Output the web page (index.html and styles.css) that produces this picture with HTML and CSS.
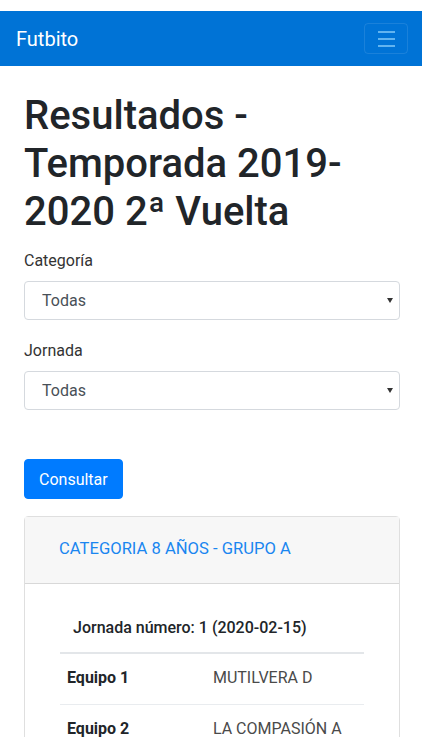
FILE: index.html
```html
<!DOCTYPE html>
<html lang="es">

<head>
    <meta charset="UTF-8">
    <meta name="viewport" content="width=device-width, initial-scale=1.0">
    <title>Resultados - Futbito</title>
    <link rel="stylesheet" href="styles.css">
</head>

<body>
    <div class="screen">
        <nav class="navbar">
            <a class="brand" href="#">Futbito</a>
            <button class="toggler" type="button">
                <span class="bar"></span>
                <span class="bar"></span>
                <span class="bar"></span>
            </button>
        </nav>

        <main class="container">
            <h1>Resultados - Temporada 2019-2020 2ª Vuelta</h1>

            <form class="filters">
                <div class="form-group">
                    <label for="categoria">Categoría</label>
                    <div class="select-wrap">
                        <select id="categoria">
                            <option>Todas</option>
                        </select>
                    </div>
                </div>
                <div class="form-group">
                    <label for="jornada">Jornada</label>
                    <div class="select-wrap">
                        <select id="jornada">
                            <option>Todas</option>
                        </select>
                    </div>
                </div>
                <button class="btn-primary" type="button">Consultar</button>
            </form>

            <div class="card">
                <div class="card-header">
                    <a href="#">CATEGORIA 8 AÑOS - GRUPO A</a>
                </div>
                <div class="card-body">
                    <table class="results">
                        <thead>
                            <tr>
                                <th colspan="2">Jornada número: 1 (2020-02-15)</th>
                            </tr>
                        </thead>
                        <tbody>
                            <tr>
                                <th class="label">Equipo 1</th>
                                <td>MUTILVERA D</td>
                            </tr>
                            <tr>
                                <th class="label">Equipo 2</th>
                                <td>LA COMPASIÓN A</td>
                            </tr>
                        </tbody>
                    </table>
                </div>
            </div>
        </main>
    </div>
</body>

</html>
```

FILE: styles.css
```css
* {
    box-sizing: border-box;
}

html,
body {
    margin: 0;
    background-color: #fff;
}

body {
    font-family: Roboto, "Liberation Sans", sans-serif;
    font-size: 16px;
    line-height: 1.5;
    color: #212529;
}

.screen {
    margin-top: 11px;
    height: 726px;
    overflow: hidden;
}

/* barra superior */

.navbar {
    display: flex;
    align-items: center;
    justify-content: space-between;
    height: 55px;
    padding: 0 14px 0 16px;
    background-color: #0073d6;
}

.brand {
    font-size: 20px;
    color: #fff;
    text-decoration: none;
}

.toggler {
    display: flex;
    flex-direction: column;
    align-items: center;
    justify-content: center;
    gap: 5px;
    width: 44px;
    height: 31px;
    padding: 0;
    border: 1px solid rgba(255, 255, 255, .1);
    border-radius: 4px;
    background: transparent;
}

.toggler .bar {
    display: block;
    width: 17px;
    height: 2px;
    background-color: #62b4f0;
}

/* contenido */

.container {
    padding: 0 22px 0 24px;
}

h1 {
    margin: 26px 0 13px;
    font-size: 40px;
    font-weight: 500;
    line-height: 1.2;
}

.form-group {
    margin-bottom: 19px;
}

.form-group label {
    display: block;
    margin-bottom: 8px;
    color: #333;
}

.select-wrap {
    position: relative;
}

.select-wrap::after {
    content: "";
    position: absolute;
    top: 17px;
    right: 7px;
    border-left: 3px solid transparent;
    border-right: 3px solid transparent;
    border-top: 5px solid #333;
}

select {
    display: block;
    width: 100%;
    height: 39px;
    padding: 0 24px 0 17px;
    font-family: inherit;
    font-size: 16px;
    color: #495057;
    background-color: #fff;
    border: 1px solid #d5d9de;
    border-radius: 4px;
    -webkit-appearance: none;
    appearance: none;
}

.btn-primary {
    display: inline-block;
    margin-top: 30px;
    height: 40px;
    padding: 0 14px;
    font-family: inherit;
    font-size: 16px;
    color: #fff;
    background-color: #007bff;
    border: 1px solid #007bff;
    border-radius: 4px;
}

/* tarjeta de resultados */

.card {
    margin-top: 17px;
    border: 1px solid rgba(0, 0, 0, .125);
    border-radius: 4px;
}

.card-header {
    padding: 20px 34px 21px;
    background-color: #f7f7f7;
    border-bottom: 1px solid rgba(0, 0, 0, .125);
}

.card-header a {
    font-size: 16.6px;
    color: #1a86f0;
    text-decoration: none;
}

.card-body {
    padding: 20px 35px 0;
}

.results {
    width: 100%;
    border-collapse: collapse;
}

.results thead th {
    padding: 12px 13px;
    text-align: left;
    font-weight: 500;
    border-bottom: 2px solid #e3e6e9;
}

.results tbody th,
.results tbody td {
    padding: 12px 7px 14px;
    text-align: left;
    border-top: 1px solid #e9ecef;
}

.results tbody tr:first-child th,
.results tbody tr:first-child td {
    border-top: 0;
}

.results .label {
    width: 48%;
    font-weight: 700;
}

.results td {
    color: #4a4a4a;
}
```
